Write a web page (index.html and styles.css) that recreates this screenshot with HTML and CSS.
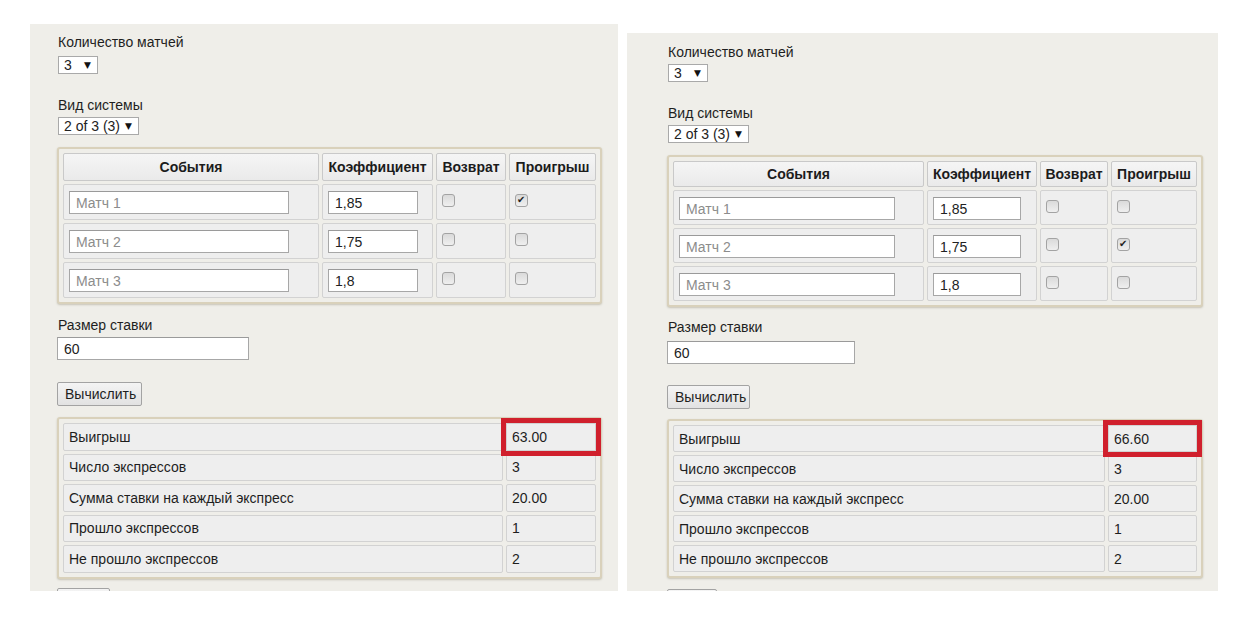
FILE: index.html
```html
<!DOCTYPE html>
<html lang="ru">
<head>
<meta charset="utf-8">
<title>Калькулятор системы</title>
<link rel="stylesheet" href="styles.css">
</head>
<body>
<div class="page">
  <section class="panel panel--left">
    <div class="field-label">Количество матчей</div>
    <div class="select select--count"><span>3</span><span class="arrow">▼</span></div>
    <div class="field-label field-label--system">Вид системы</div>
    <div class="select select--system"><span>2 of 3 (3)</span><span class="arrow">▼</span></div>
    <table class="box events">
      <thead>
        <tr><th class="c-event">События</th><th class="c-coef">Коэффициент</th><th class="c-ret">Возврат</th><th class="c-lose">Проигрыш</th></tr>
      </thead>
      <tbody>
        <tr><td><input class="inp inp-event" placeholder="Матч 1"></td><td><input class="inp inp-coef" value="1,85"></td><td><input type="checkbox" class="chk"></td><td><input type="checkbox" class="chk" checked></td></tr>
        <tr><td><input class="inp inp-event" placeholder="Матч 2"></td><td><input class="inp inp-coef" value="1,75"></td><td><input type="checkbox" class="chk"></td><td><input type="checkbox" class="chk"></td></tr>
        <tr><td><input class="inp inp-event" placeholder="Матч 3"></td><td><input class="inp inp-coef" value="1,8"></td><td><input type="checkbox" class="chk"></td><td><input type="checkbox" class="chk"></td></tr>
      </tbody>
    </table>
    <div class="field-label field-label--stake">Размер ставки</div>
    <input class="inp inp-stake" value="60">
    <button class="btn btn-calc">Вычислить</button>
    <table class="box results">
      <tbody>
        <tr><td class="r-label">Выигрыш</td><td class="r-value hl">63.00</td></tr>
        <tr><td class="r-label">Число экспрессов</td><td class="r-value">3</td></tr>
        <tr><td class="r-label">Сумма ставки на каждый экспресс</td><td class="r-value">20.00</td></tr>
        <tr><td class="r-label">Прошло экспрессов</td><td class="r-value">1</td></tr>
        <tr><td class="r-label">Не прошло экспрессов</td><td class="r-value">2</td></tr>
      </tbody>
    </table>
    <button class="btn btn-cut" aria-label="Сброс"></button>
  </section>

  <section class="panel panel--right">
    <div class="field-label">Количество матчей</div>
    <div class="select select--count"><span>3</span><span class="arrow">▼</span></div>
    <div class="field-label field-label--system">Вид системы</div>
    <div class="select select--system"><span>2 of 3 (3)</span><span class="arrow">▼</span></div>
    <table class="box events">
      <thead>
        <tr><th class="c-event">События</th><th class="c-coef">Коэффициент</th><th class="c-ret">Возврат</th><th class="c-lose">Проигрыш</th></tr>
      </thead>
      <tbody>
        <tr><td><input class="inp inp-event" placeholder="Матч 1"></td><td><input class="inp inp-coef" value="1,85"></td><td><input type="checkbox" class="chk"></td><td><input type="checkbox" class="chk"></td></tr>
        <tr><td><input class="inp inp-event" placeholder="Матч 2"></td><td><input class="inp inp-coef" value="1,75"></td><td><input type="checkbox" class="chk"></td><td><input type="checkbox" class="chk" checked></td></tr>
        <tr><td><input class="inp inp-event" placeholder="Матч 3"></td><td><input class="inp inp-coef" value="1,8"></td><td><input type="checkbox" class="chk"></td><td><input type="checkbox" class="chk"></td></tr>
      </tbody>
    </table>
    <div class="field-label field-label--stake">Размер ставки</div>
    <input class="inp inp-stake" value="60">
    <button class="btn btn-calc">Вычислить</button>
    <table class="box results">
      <tbody>
        <tr><td class="r-label">Выигрыш</td><td class="r-value hl">66.60</td></tr>
        <tr><td class="r-label">Число экспрессов</td><td class="r-value">3</td></tr>
        <tr><td class="r-label">Сумма ставки на каждый экспресс</td><td class="r-value">20.00</td></tr>
        <tr><td class="r-label">Прошло экспрессов</td><td class="r-value">1</td></tr>
        <tr><td class="r-label">Не прошло экспрессов</td><td class="r-value">2</td></tr>
      </tbody>
    </table>
    <button class="btn btn-cut" aria-label="Сброс"></button>
  </section>
</div>
</body>
</html>
```

FILE: styles.css
```css
* { box-sizing: border-box; }

html, body {
  margin: 0;
  padding: 0;
  background: #ffffff;
}

body {
  font-family: "Liberation Sans", Arial, sans-serif;
  font-size: 14px;
  color: #1e1e1e;
}

.page {
  display: flex;
  align-items: flex-start;
  gap: 9px;
  padding-left: 30px;
  width: 1251px;
  height: 623px;
  overflow: hidden;
}

/* ---------- panels ---------- */
.panel {
  display: flex;
  flex-direction: column;
  align-items: flex-start;
  background: #efeee9;
  overflow: hidden;
}

.panel > * { flex-shrink: 0; }

.panel--left {
  width: 588px;
  height: 567px;
  margin-top: 24px;
  padding: 10px 0 0 27px;
}

.panel--right {
  width: 591px;
  height: 558px;
  margin-top: 33px;
  padding: 11px 0 0 40px;
}

.field-label {
  line-height: 16px;
  padding-left: 1px;
}

.field-label--system { margin-top: 23px; }
.field-label--stake { margin-top: 13px; }
.panel--right .field-label--stake { margin-top: 12px; }

/* ---------- select look-alikes ---------- */
.select {
  display: inline-flex;
  align-items: center;
  justify-content: space-between;
  height: 18px;
  margin-top: 6px;
  margin-left: 1px;
  padding: 0 6px 0 5px;
  background: #ffffff;
  border: 1px solid #a9a9a9;
  line-height: 16px;
  color: #222;
}

.select--count { width: 40px; }
.select--system { width: 81px; margin-top: 4px; }
.panel--right .select--count { margin-top: 4px; }

.arrow {
  font-family: "DejaVu Sans", sans-serif;
  font-size: 9px;
  line-height: 9px;
  color: #111;
}

/* ---------- boxed tables ---------- */
.box {
  border: 2px solid #d9d1bb;
  border-radius: 3px;
  padding: 1px;
  border-collapse: separate;
  border-spacing: 3px;
  table-layout: fixed;
  background: #efeee9;
  box-shadow: 0 1px 2px rgba(110, 100, 70, 0.3);
}

.box th,
.box td {
  border: 1px solid #d2d2d2;
  border-radius: 2px;
  background: #eeeeee;
  padding: 0;
}

.events { margin-top: 12px; width: 545px; }
.panel--right .events { width: 536px; }

.events th {
  height: 28px;
  font-weight: bold;
  text-align: center;
  vertical-align: middle;
  color: #1c1c1c;
  background: linear-gradient(#f5f5f5, #eaeaea);
  border-color: #c9c9c9;
}

.panel--right .events th { height: 26px; }

.c-event { width: 256px; }
.c-coef { width: 111px; }
.c-ret { width: 70px; }
.c-lose { width: 87px; }

.panel--right .c-event { width: 251px; }
.panel--right .c-coef { width: 110px; }
.panel--right .c-ret { width: 68px; }
.panel--right .c-lose { width: 86px; }

.events td {
  height: 36px;
  vertical-align: top;
  padding: 6px 0 0 5px;
}

.panel--right .events td { height: 35px; }

/* ---------- inputs ---------- */
.inp {
  height: 23px;
  margin: 0;
  padding: 0 6px;
  border: 1px solid #a7a7a7;
  border-top-color: #9a9a9a;
  background: #ffffff;
  font-family: "Liberation Sans", Arial, sans-serif;
  font-size: 14px;
  color: #222;
  outline: none;
}

.inp::placeholder { color: #8c8c8c; }

.inp-event { width: 220px; }
.inp-coef { width: 90px; }
.panel--right .inp-event { width: 216px; }
.panel--right .inp-coef { width: 88px; }

.inp-stake {
  width: 192px;
  margin-top: 4px;
}

.panel--right .inp-stake { width: 188px; margin-top: 6px; }

/* ---------- checkboxes ---------- */
.chk {
  appearance: none;
  -webkit-appearance: none;
  display: block;
  width: 13px;
  height: 13px;
  margin: 3px 0 0 0;
  border: 1px solid #a3a3a3;
  border-radius: 3px;
  background: linear-gradient(#dadada, #efefef);
  position: relative;
}

.chk:checked::after {
  content: "✔";
  position: absolute;
  left: 1px;
  top: -1px;
  font-family: "DejaVu Sans", sans-serif;
  font-size: 10px;
  line-height: 12px;
  color: #222;
}

/* ---------- buttons ---------- */
.btn {
  margin: 22px 0 0 0;
  height: 24px;
  padding: 0 7px;
  border: 1px solid #a3a3a3;
  border-radius: 2px;
  background: linear-gradient(#f4f4f4, #e2e2e2);
  font-family: "Liberation Sans", Arial, sans-serif;
  font-size: 14px;
  color: #1e1e1e;
}

.btn-calc { width: 85px; }
.panel--right .btn-calc { width: 83px; margin-top: 21px; }

.btn-cut {
  width: 53px;
  margin-top: 9px;
}

.panel--right .btn-cut { width: 50px; margin-top: 11px; }

/* ---------- results ---------- */
.results { margin-top: 11px; width: 545px; }
.panel--right .results { width: 536px; margin-top: 10px; }

.results td {
  height: 27.5px;
  vertical-align: middle;
  padding: 0 5px;
  background: #eeeeee;
}

.panel--right .results td { height: 27px; }

.r-value { width: 90px; }
.panel--right .r-value { width: 89px; }

.results td.hl {
  border-radius: 0;
  outline: 5px solid #d0202d;
  outline-offset: 0;
}
```
